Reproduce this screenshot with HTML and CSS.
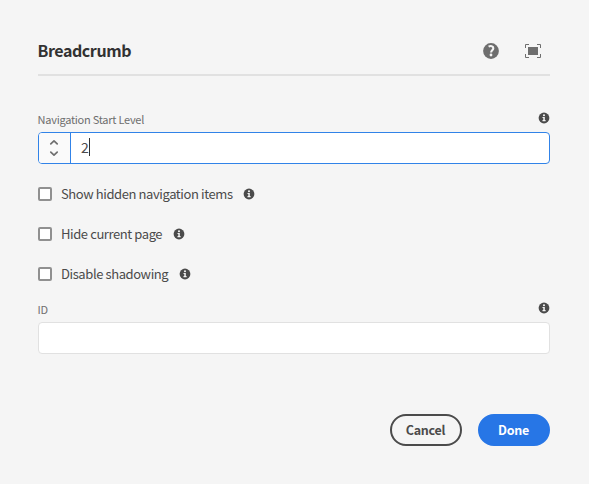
FILE: index.html
```html
<!DOCTYPE html>
<html lang="en">
<head>
<meta charset="utf-8">
<title>Breadcrumb</title>
<link rel="stylesheet" href="styles.css">
</head>
<body>
<svg class="defs" width="0" height="0">
  <symbol id="info" viewBox="0 0 12 12">
    <circle cx="6" cy="6" r="5.400" fill="#4b4b4b"/>
    <circle cx="6" cy="3.200" r="1.050" fill="#f5f5f5"/>
    <path d="M4.500 5.100h2.300v3h.8v1.100H4.500V8.100h.8V6.100h-.8z" fill="#f5f5f5"/>
  </symbol>
</svg>
<form class="dialog">
  <header class="header">
    <h1 class="title">Breadcrumb</h1>
    <svg class="help" width="16" height="16" viewBox="0 0 16 16">
      <circle cx="8" cy="8" r="7.900" fill="#6e6e6e"/>
      <path d="M5.600 3.700C7.600 2.500 10.300 3 10.300 5.200c0 2-2.200 2-2.200 4.200" fill="none" stroke="#f5f5f5" stroke-width="2.100"/>
      <circle cx="8" cy="12" r="1.400" fill="#f5f5f5"/>
    </svg>
    <svg class="full" width="16" height="14" viewBox="0 0 16 14">
      <path d="M3 3h10v8H3z" fill="#6e6e6e"/>
      <path d="M.5 4V.5H4M12 .5h3.500V4M15.500 10v3.500H12M4 13.500H.5V10" fill="none" stroke="#6e6e6e"/>
    </svg>
  </header>
  <div class="label-row level-label"><label class="label">Navigation Start Level</label><svg class="info"><use href="#info"/></svg></div>
  <div class="field number">
    <div class="stepper">
      <svg width="10" height="20" viewBox="0 0 10 20"><path d="M1.800 5.800 5 2.800l3.200 3M1.800 14.200 5 17.200l3.200-3" fill="none" stroke="#6e6e6e" stroke-width="1.700" stroke-linecap="round" stroke-linejoin="round"/></svg>
    </div>
    <div class="value"><span class="digits">2</span><span class="caret"></span></div>
  </div>
  <div class="check"><span class="box"></span><span class="check-text">Show hidden navigation items</span><svg class="info"><use href="#info"/></svg></div>
  <div class="check"><span class="box"></span><span class="check-text">Hide current page</span><svg class="info"><use href="#info"/></svg></div>
  <div class="check"><span class="box"></span><span class="check-text">Disable shadowing</span><svg class="info"><use href="#info"/></svg></div>
  <div class="label-row id-label"><label class="label">ID</label><svg class="info"><use href="#info"/></svg></div>
  <div class="field"></div>
  <footer class="actions">
    <button type="button" class="button">Cancel</button>
    <button type="button" class="button primary">Done</button>
  </footer>
</form>
</body>
</html>
```
FILE: styles.css
```css
* { box-sizing: border-box; }
body {
  margin: 0;
  height: 484px;
  overflow: hidden;
  background: #f5f5f5;
  color: #4b4b4b;
  font-family: "Noto Sans CJK SC", "Noto Sans", sans-serif;
}
svg { display: block; flex: none; }
.defs { position: absolute; }
.dialog { width: 512px; margin: 0 0 0 38px; padding-top: 28px; }
.header {
  display: flex;
  align-items: center;
  height: 48px;
  border-bottom: 2px solid #e1e1e1;
}
.title {
  flex: 1;
  margin: 0 0 0 -0.6px;
  padding-bottom: 2px;
  color: #323232;
  font-size: 16px;
  line-height: 24px;
  font-weight: 700;
  letter-spacing: -0.42px;
}
.help { margin-right: 26px; }
.full { margin-right: 9px; }
.label-row {
  display: flex;
  justify-content: space-between;
  height: 24px;
}
.level-label { margin-top: 32px; }
.id-label { margin-top: 4px; }
.label {
  margin-left: -0.5px;
  padding-top: 3px;
  color: #6e6e6e;
  font-size: 11px;
  line-height: 16px;
  letter-spacing: -0.25px;
}
.info { width: 12px; height: 12px; }
.label-row .info { margin-top: 4px; }
.field {
  height: 32px;
  border: 1px solid #e1e1e1;
  border-radius: 4px;
  background: #fff;
}
.number { display: flex; border-color: #3183e8; margin-bottom: 10px; }
.stepper {
  display: flex;
  align-items: center;
  justify-content: center;
  width: 32px;
  padding-right: 1px;
  border-right: 1px solid #3183e8;
  border-radius: 3px 0 0 3px;
  background: #fafafa;
}
.value {
  display: flex;
  align-items: center;
  padding-left: 10px;
  font-size: 14px;
}
.digits { padding-bottom: 2px; line-height: 20px; }
.caret { width: 1px; height: 18px; margin-bottom: 2px; background: #323232; }
.check { display: flex; align-items: center; height: 40px; }
.box {
  width: 14px;
  height: 14px;
  margin-right: 9px;
  border: 2px solid #909090;
  border-radius: 2px;
  background: #fff;
}
.check-text {
  font-size: 13px;
  line-height: 20px;
  letter-spacing: -0.41px;
  white-space: nowrap;
}
.check .info { margin-left: 10.5px; }
.actions {
  display: flex;
  justify-content: flex-end;
  gap: 16px;
  margin-top: 60px;
}
.button {
  display: flex;
  align-items: center;
  justify-content: center;
  width: 72px;
  height: 32px;
  padding: 0 1px 0 0;
  border: 2px solid #4b4b4b;
  border-radius: 16px;
  background: transparent;
  color: #4b4b4b;
  font: 700 12.5px/20px "Noto Sans CJK SC", sans-serif;
  letter-spacing: -0.25px;
}
.primary { border-color: #2776e6; background: #2776e6; color: #fff; }
```
